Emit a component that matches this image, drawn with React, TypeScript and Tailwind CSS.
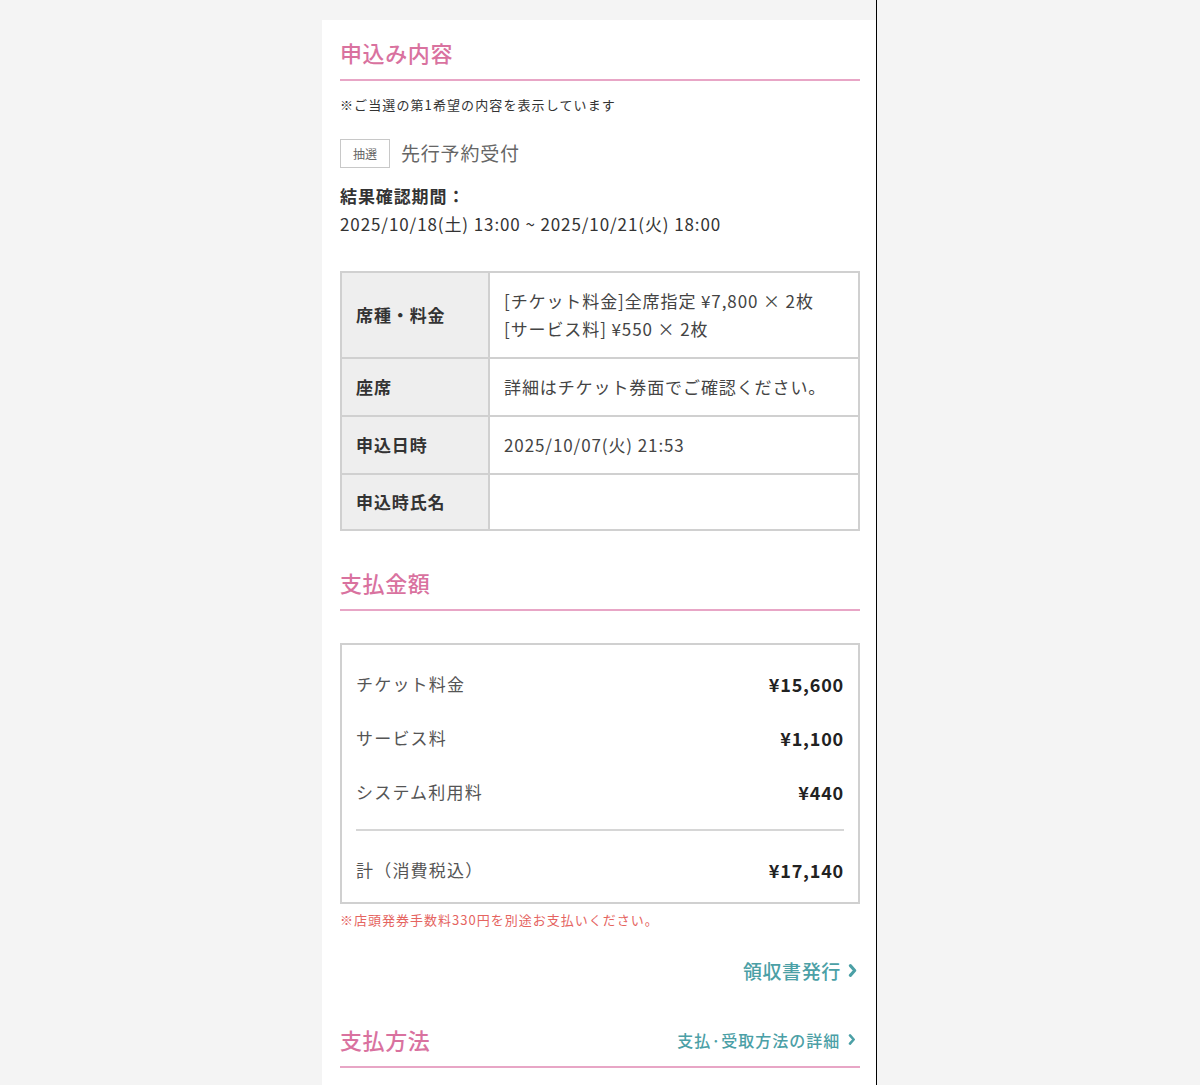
import React from "react";

const font = { fontFamily: '"Noto Sans CJK JP", "Noto Sans", sans-serif' };

function Chevron({ size = 12 }: { size?: number }) {
  return (
    <svg width={size * 0.7} height={size} viewBox="0 0 7 12" fill="none" className="inline-block">
      <polyline points="1.5,1.5 5.5,6 1.5,10.5" stroke="currentColor" strokeWidth="2.8" strokeLinecap="round" strokeLinejoin="round" />
    </svg>
  );
}

function Heading({ children, right }: { children: React.ReactNode; right?: React.ReactNode }) {
  return (
    <div className="flex items-center justify-between border-b-2 border-[#e8a6c6] pb-[10px]">
      <h2 className="text-[22px] leading-[33px] font-medium tracking-[0.6px] text-[#d9729f]">{children}</h2>
      {right}
    </div>
  );
}

const rows: { label: string; value: React.ReactNode; h: string }[] = [
  {
    label: "席種・料金",
    value: (
      <>
        <div>[チケット料金]全席指定 ¥7,800 × 2枚</div>
        <div>[サービス料] ¥550 × 2枚</div>
      </>
    ),
    h: "h-[84px]",
  },
  { label: "座席", value: "詳細はチケット券面でご確認ください。", h: "h-[58px] border-t-2 border-[#d0d0d0]" },
  { label: "申込日時", value: "2025/10/07(火) 21:53", h: "h-[58px] border-t-2 border-[#d0d0d0]" },
  { label: "申込時氏名", value: "", h: "h-[56px] border-t-2 border-[#d0d0d0]" },
];

const fees = [
  { label: "チケット料金", value: "¥15,600" },
  { label: "サービス料", value: "¥1,100" },
  { label: "システム利用料", value: "¥440" },
];

export default function App() {
  return (
    <div className="flex min-h-[1085px] bg-[#f4f4f4]" style={font}>
      <div className="w-[322px] shrink-0" />
      <div className="w-[555px] shrink-0 border-r border-black pt-[20px]">
        <div className="bg-white pl-[18px] pr-[16px] pt-[16px] pb-[40px] min-h-[1065px]">
          <Heading>申込み内容</Heading>

          <p className="mt-[14px] text-[13px] leading-[20px] tracking-[1.1px] text-[#333]">※ご当選の第1希望の内容を表示しています</p>

          <div className="mt-[24px] flex items-center">
            <span className="flex h-[29px] w-[50px] items-center justify-center border border-[#c8c8c8] text-[12px] text-[#666]">抽選</span>
            <span className="ml-[11px] text-[19px] tracking-[0.8px] text-[#666]">先行予約受付</span>
          </div>

          <div className="mt-[14px] text-[17px] leading-[28px] tracking-[0.9px] text-[#333]">
            <div className="font-bold">結果確認期間：</div>
            <div>2025/10/18(土) 13:00 ~ 2025/10/21(火) 18:00</div>
          </div>

          <div className="mt-[33px] border-2 border-[#d0d0d0]">
            {rows.map((r) => (
              <div key={r.label} className={`flex ${r.h}`}>
                <div className="flex w-[148px] shrink-0 items-center border-r-2 border-[#d0d0d0] bg-[#eeeeee] pl-[14px] text-[17px] font-bold tracking-[0.9px] text-[#333]">
                  {r.label}
                </div>
                <div className="flex flex-col justify-center pl-[14px] text-[17px] leading-[28px] tracking-[0.9px] text-[#444]">{r.value}</div>
              </div>
            ))}
          </div>

          <div className="mt-[35px]">
            <Heading>支払金額</Heading>
          </div>

          <div className="mt-[32px] border-2 border-[#d0d0d0] px-[14px] pt-[12px] pb-[5px]">
            {fees.map((f) => (
              <div key={f.label} className="flex h-[54px] items-center justify-between text-[17px] tracking-[1.2px]">
                <span className="text-[#555]">{f.label}</span>
                <span className="text-[18px] font-bold tracking-[0.8px] text-[#222]">{f.value}</span>
              </div>
            ))}
            <div className="mt-[10px] border-t-2 border-[#d6d6d6]" />
            <div className="mt-[12px] flex h-[54px] items-center justify-between text-[17px] tracking-[1.2px]">
              <span className="text-[#555]">計（消費税込）</span>
              <span className="text-[18px] font-bold tracking-[0.8px] text-[#222]">¥17,140</span>
            </div>
          </div>

          <p className="mt-[7px] text-[13px] leading-[18px] tracking-[1px] text-[#e5645f]">※店頭発券手数料330円を別途お支払いください。</p>

          <div className="mt-[28px] flex justify-end pr-[3px]">
            <a className="flex items-center gap-[7px] text-[19px] leading-[27px] font-medium tracking-[0.6px] text-[#4ba0a6]">
              領収書発行
              <Chevron size={13} />
            </a>
          </div>

          <div className="mt-[39px]">
            <Heading
              right={
                <a className="flex items-center gap-[8px] pr-[4px] text-[16px] font-medium tracking-[1px] text-[#4ba0a6]">
                  支払·受取方法の詳細
                  <Chevron size={11} />
                </a>
              }
            >
              支払方法
            </Heading>
          </div>
        </div>
      </div>
    </div>
  );
}
